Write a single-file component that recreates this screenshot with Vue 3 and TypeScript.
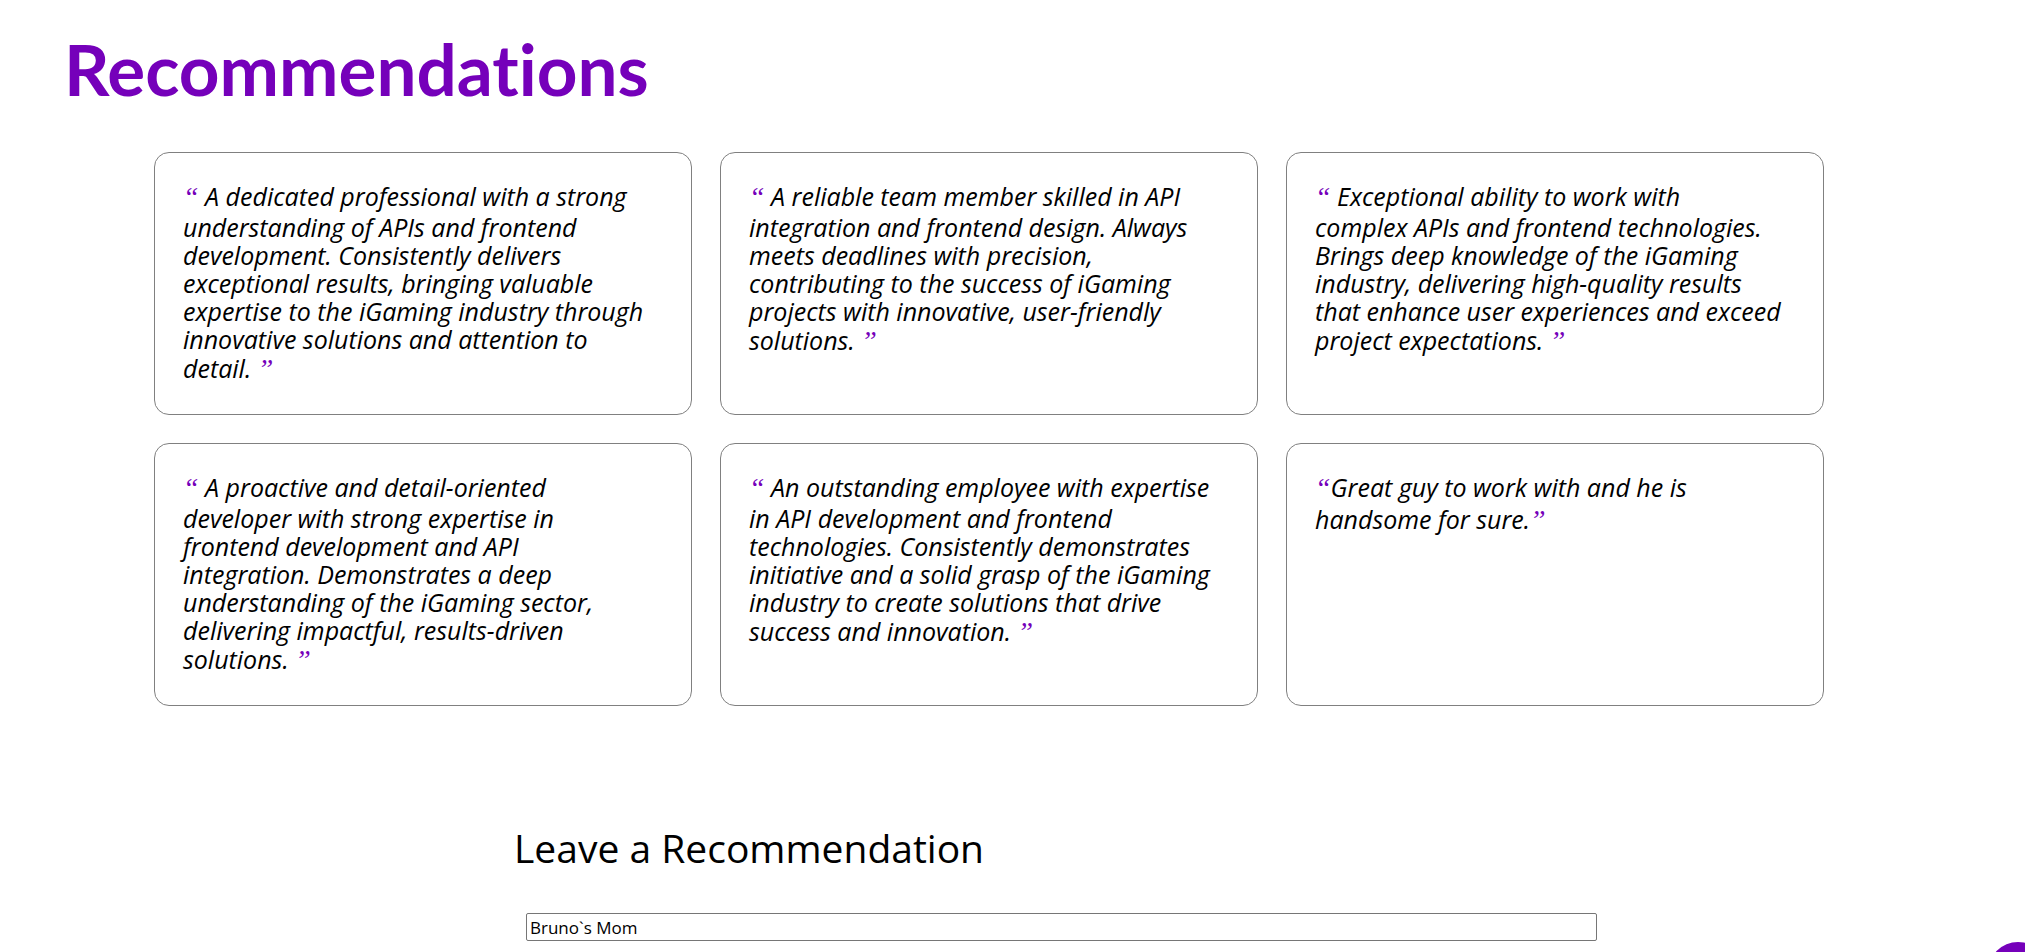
<script setup lang="ts">
import { ref } from 'vue'

interface Recommendation {
  id: number
  text: string
  spaced: boolean
}

const recommendations = ref<Recommendation[]>([
  { id: 1, spaced: true, text: 'A dedicated professional with a strong\nunderstanding of APIs and frontend\ndevelopment. Consistently delivers\nexceptional results, bringing valuable\nexpertise to the iGaming industry through\ninnovative solutions and attention to\ndetail.' },
  { id: 2, spaced: true, text: 'A reliable team member skilled in API\nintegration and frontend design. Always\nmeets deadlines with precision,\ncontributing to the success of iGaming\nprojects with innovative, user-friendly\nsolutions.' },
  { id: 3, spaced: true, text: 'Exceptional ability to work with\ncomplex APIs and frontend technologies.\nBrings deep knowledge of the iGaming\nindustry, delivering high-quality results\nthat enhance user experiences and exceed\nproject expectations.' },
  { id: 4, spaced: true, text: 'A proactive and detail-oriented\ndeveloper with strong expertise in\nfrontend development and API\nintegration. Demonstrates a deep\nunderstanding of the iGaming sector,\ndelivering impactful, results-driven\nsolutions.' },
  { id: 5, spaced: true, text: 'An outstanding employee with expertise\nin API development and frontend\ntechnologies. Consistently demonstrates\ninitiative and a solid grasp of the iGaming\nindustry to create solutions that drive\nsuccess and innovation.' },
  { id: 6, spaced: false, text: 'Great guy to work with and he is\nhandsome for sure.' },
])

const author = ref('Bruno`s Mom')

function scrollToTop(): void {
  window.scrollTo({ top: 0, behavior: 'smooth' })
}
</script>

<template>
  <main class="page">
    <section>
      <h1 class="title">Recommendations</h1>
      <div class="cards">
        <blockquote v-for="item in recommendations" :key="item.id" class="card"><span class="quote">“</span>{{ item.spaced ? ' ' : '' }}{{ item.text }}{{ item.spaced ? ' ' : '' }}<span class="quote">”</span></blockquote>
      </div>
    </section>
    <form class="leave" @submit.prevent>
      <h2 class="subtitle">Leave a Recommendation</h2>
      <input v-model="author" class="field" type="text" aria-label="Name" />
    </form>
    <button class="to-top" type="button" aria-label="Back to top" @click="scrollToTop"></button>
  </main>
</template>

<style>
body {
  margin: 0;
  background: #fff;
}
</style>

<style scoped>
.page {
  display: flow-root;
  color: #000;
  font-family: "Open Sans", "Noto Sans", sans-serif;
}

.title {
  margin: 29px 0 43px 64px;
  color: #7500ba;
  font: bold 71px/80px Lato, "Open Sans", sans-serif;
  font-variant-ligatures: none;
}

.cards {
  display: grid;
  grid-template-columns: repeat(3, minmax(0, 1fr));
  grid-auto-rows: minmax(263px, auto);
  gap: 28px;
  margin: 0 201px 0 154px;
}

.card {
  box-sizing: border-box;
  margin: 0;
  padding: 28px;
  border: 1px solid #808080;
  border-radius: 15px;
  font-size: 25px;
  font-style: italic;
  line-height: 28px;
  white-space: pre-line;
}

.quote {
  color: #7500ba;
  font-family: "Liberation Serif", serif;
  font-size: 28px;
  line-height: 32px;
}

.leave {
  display: flex;
  flex-direction: column;
  margin: 118px 416px 40px 514px;
}

.subtitle {
  margin: 0 0 41px;
  font-size: 39px;
  font-weight: 400;
  line-height: 48px;
}

.field {
  box-sizing: border-box;
  height: 28px;
  margin: 0 12px;
  padding: 1px 3px;
  border: 1px solid #767676;
  border-radius: 2px;
  background: #fff;
  color: #000;
  font: 17px "Open Sans", "Noto Sans", sans-serif;
}

.to-top {
  position: fixed;
  right: -23px;
  bottom: -50px;
  width: 60px;
  height: 60px;
  padding: 0;
  border: 0;
  border-radius: 50%;
  background: #7500ba;
  cursor: pointer;
}
</style>
